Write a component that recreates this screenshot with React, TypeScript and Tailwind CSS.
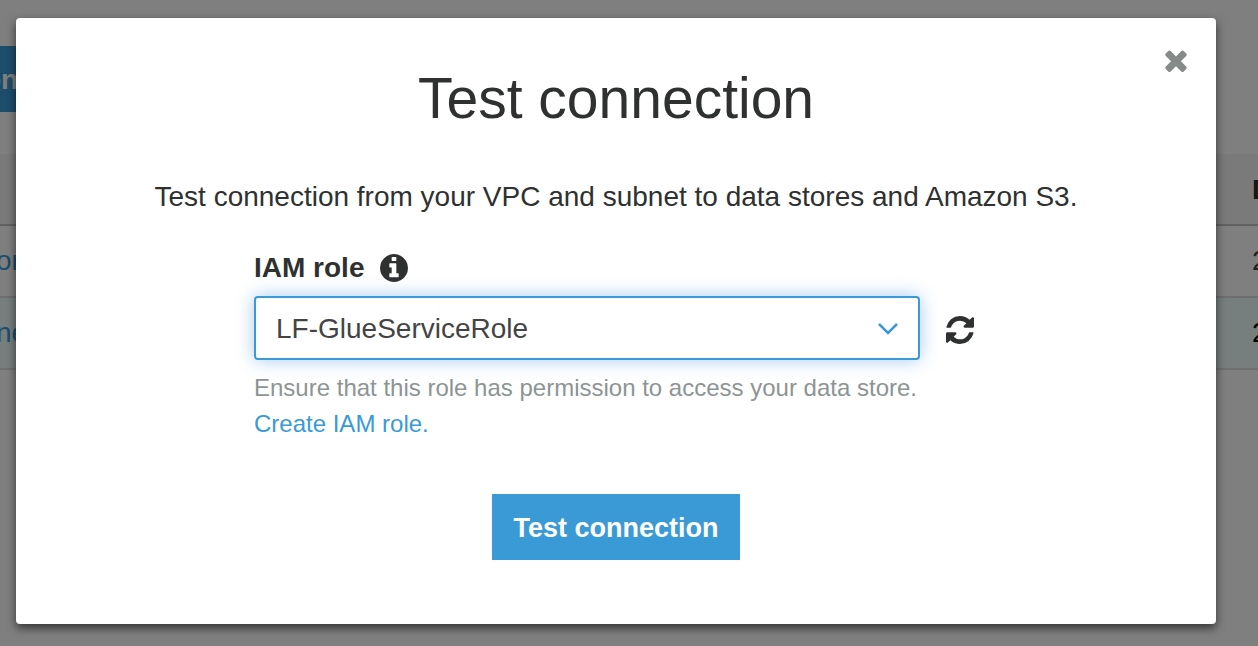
import React, { useState } from "react";

function CloseIcon() {
  return (
    <svg viewBox="302 334 1188 1220" className="h-[22px] w-[22px]" fill="currentColor" aria-hidden="true">
      <path d="M1490 1322q0 40-28 68l-136 136q-28 28-68 28t-68-28l-294-294-294 294q-28 28-68 28t-68-28l-136-136q-28-28-28-68t28-68l294-294-294-294q-28-28-28-68t28-68l136-136q28-28 68-28t68 28l294 294 294-294q28-28 68-28t68 28l136 136q28 28 28 68t-28 68l-294 294 294 294q28 28 28 68z" />
    </svg>
  );
}

function InfoIcon() {
  return (
    <svg viewBox="128 128 1536 1536" className="h-7 w-7" fill="currentColor" aria-hidden="true">
      <path d="M1152 1376v-160q0-14-9-23t-23-9h-96v-512q0-14-9-23t-23-9h-320q-14 0-23 9t-9 23v160q0 14 9 23t23 9h96v320h-96q-14 0-23 9t-9 23v160q0 14 9 23t23 9h448q14 0 23-9t9-23zm-128-896v-160q0-14-9-23t-23-9h-192q-14 0-23 9t-9 23v160q0 14 9 23t23 9h192q14 0 23-9t9-23zm640 416q0 209-103 385.5t-279.5 279.5-385.5 103-385.5-103-279.5-279.5-103-385.5 103-385.5 279.5-279.5 385.5-103 385.5 103 279.5 279.5 103 385.5z" />
    </svg>
  );
}

function RefreshIcon() {
  return (
    <svg viewBox="128 128 1536 1536" className="h-7 w-7" fill="currentColor" aria-hidden="true">
      <path d="M1639 1056q0 5-1 7-64 268-268 434.5t-478 166.5q-146 0-282.5-55t-243.5-157l-129 129q-19 19-45 19t-45-19-19-45v-448q0-26 19-45t45-19h448q26 0 45 19t19 45-19 45l-137 137q71 66 161 102t187 36q134 0 250-65t186-179q11-17 53-117 8-23 30-23h192q13 0 22.5 9.5t9.5 22.5zm25-800v448q0 26-19 45t-45 19h-448q-26 0-45-19t-19-45 19-45l138-138q-148-137-349-137-134 0-250 65t-186 179q-11 17-53 117-8 23-30 23h-199q-13 0-22.5-9.5t-9.5-22.5v-7q65-268 270-434.5t480-166.5q146 0 284 55.5t245 156.5l130-129q19-19 45-19t45 19 19 45z" />
    </svg>
  );
}

function ConnectionsPage() {
  return (
    <div className="min-h-screen overflow-hidden bg-white pt-[46px] text-[28px] leading-8" inert>
      <button className="-ml-4 h-[66px] bg-[#3a9ad5] pt-[2px] pr-8 font-bold text-white">on</button>
      <table className="mt-[42px] w-full table-fixed border-separate border-spacing-0 text-left">
        <thead>
          <tr className="h-[72px] bg-[#f4f4f4]">
            <th className="border-b-2 border-[#c4c4c4]" />
            <th className="w-1.5 border-b-2 border-[#c4c4c4] p-0 pt-[2px] text-[#2f3131]">D</th>
          </tr>
        </thead>
        <tbody>
          <tr className="h-[72px]">
            <td className="border-b-2 border-[#dedede] p-0">
              <a href="#first" className="-ml-1 text-[#3a9ad5]">on</a>
            </td>
            <td className="border-b-2 border-[#dedede] p-0 text-[#444]">2</td>
          </tr>
          <tr className="h-[72px] bg-[#ecfffc]">
            <td className="border-b-2 border-[#dedede] p-0">
              <a href="#second" className="-ml-1 text-[#3a9ad5]">ne</a>
            </td>
            <td className="border-b-2 border-[#dedede] p-0 text-black">2</td>
          </tr>
        </tbody>
      </table>
    </div>
  );
}

export default function App() {
  const [role, setRole] = useState("LF-GlueServiceRole");

  return (
    <div className="relative font-['Liberation_Sans',Arial,sans-serif]">
      <ConnectionsPage />
      <div className="absolute inset-0 bg-black/50 pt-[18px] pr-[42px] pb-[22px] pl-4">
        <div
          role="dialog"
          aria-modal="true"
          aria-labelledby="dialog-title"
          className="relative flex flex-col items-center rounded-[4px] bg-white pt-12 pb-16 text-[#2f3131] shadow-[0_4px_10px_rgba(0,0,0,0.6)]"
        >
          <button aria-label="Close" className="absolute top-8 right-[29px] text-[#868a89]">
            <CloseIcon />
          </button>
          <h1 id="dialog-title" className="text-[57px] leading-[64px]">Test connection</h1>
          <p className="mt-[51px] text-[28px] leading-8">
            Test connection from your VPC and subnet to data stores and Amazon S3.
          </p>
          <div className="mt-[39px] grid grid-cols-[666px_auto] items-center gap-x-[26px] pr-1">
            <div className="flex items-center gap-4">
              <label htmlFor="iam-role" className="text-[28px] leading-8 font-bold">IAM role</label>
              <InfoIcon />
            </div>
            <div className="relative col-start-1 mt-3">
              <select
                id="iam-role"
                value={role}
                onChange={(e) => setRole(e.target.value)}
                className="h-16 w-full appearance-none rounded-[4px] border-2 border-[#3a9ad5] bg-white px-5 pt-[2px] text-[28px] text-[#444] shadow-[0_0_18px_rgba(58,140,220,0.45)] outline-none"
              >
                <option>LF-GlueServiceRole</option>
              </select>
              <svg viewBox="0 0 20 12" className="pointer-events-none absolute top-[27px] right-[22px] h-3 w-5" fill="none" stroke="#3a9ad5" strokeWidth="2.5" aria-hidden="true">
                <path d="M1 1l9 9 9-9" />
              </svg>
            </div>
            <button aria-label="Refresh roles" className="mt-4">
              <RefreshIcon />
            </button>
            <div className="col-start-1 mt-2.5 text-[24px] leading-9 whitespace-nowrap text-[#8d9494]">
              <p>Ensure that this role has permission to access your data store.</p>
              <a href="#create-role" className="text-[#3a9ad5]">Create IAM role.</a>
            </div>
          </div>
          <button className="mt-[52px] h-[66px] bg-[#3a9ad5] px-[21px] pt-[2px] text-[27px] font-bold text-white">
            Test connection
          </button>
        </div>
      </div>
    </div>
  );
}
